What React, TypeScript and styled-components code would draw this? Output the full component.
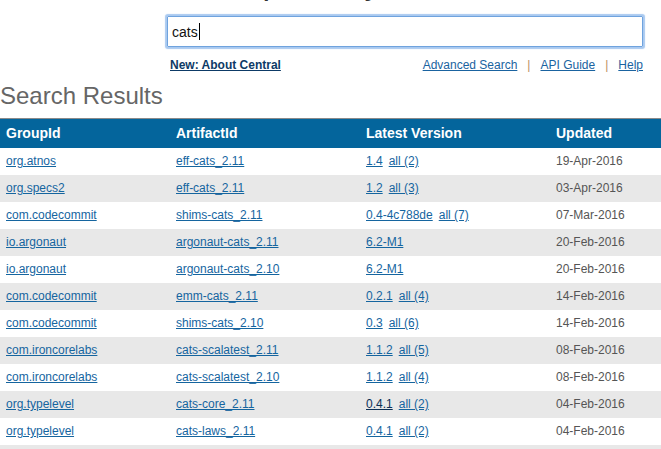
import React from "react";
import styled, { createGlobalStyle } from "styled-components";

const Global = createGlobalStyle`
  html, body { margin: 0; padding: 0; background: #ffffff; }
  body { font-family: "Liberation Sans", Arial, Helvetica, sans-serif; overflow: hidden; }
`;

const Page = styled.div`
  width: 661px;
  height: 449px;
  overflow: hidden;
  display: flex;
  flex-direction: column;
`;

const Masthead = styled.div`
  height: 4px;
  flex-shrink: 0;
  overflow: hidden;
  padding-left: 32px;
`;

const MastTitle = styled.h1`
  margin: -35px 0 0 0;
  font-size: 34px;
  line-height: 34px;
  font-weight: normal;
  color: #333;
  white-space: nowrap;
`;

const SearchArea = styled.div`
  margin-top: 12px;
  margin-left: 167px;
  width: 476px;
  display: flex;
  flex-direction: column;
`;

const Field = styled.div`
  box-sizing: border-box;
  height: 31px;
  border: 1px solid #6fa3de;
  box-shadow: 0 0 1px 2px #a9c9f0;
  border-radius: 1px;
  display: flex;
  align-items: center;
  padding-left: 4px;
  font-size: 14px;
  color: #111;
`;

const Caret = styled.span`
  display: inline-block;
  width: 1px;
  height: 17px;
  background: #000;
  margin-left: 1px;
`;

const LinkBar = styled.div`
  margin-top: 11px;
  display: flex;
  justify-content: space-between;
  align-items: center;
  font-size: 12px;
  line-height: 14px;
  padding-left: 3px;
`;

const NewsLink = styled.a`
  color: #0d3a66;
  font-weight: bold;
  text-decoration: underline;
`;

const NavLinks = styled.div`
  display: flex;
  align-items: center;
  gap: 10px;
`;

const NavLink = styled.a`
  color: #1a63a0;
  text-decoration: underline;
`;

const Sep = styled.span`
  color: #b88e5f;
`;

const Title = styled.h2`
  margin: 10px 0 0 0;
  font-size: 24px;
  line-height: 28px;
  font-weight: normal;
  color: #666;
`;

const Table = styled.table`
  margin-top: 8px;
  width: 661px;
  flex-shrink: 0;
  border-collapse: collapse;
  table-layout: fixed;
  font-size: 12px;
`;

const HeadRow = styled.tr`
  background: #04659c;
  border-top: 1px solid #8a8a8a;
`;

const Th = styled.th<{ $w?: number }>`
  ${(p) => (p.$w ? `width: ${p.$w}px;` : "")}
  height: 29px;
  padding: 0 0 0 6px;
  text-align: left;
  color: #fff;
  font-size: 14px;
  font-weight: bold;
  box-sizing: border-box;
`;

const Row = styled.tr<{ $alt: boolean }>`
  background: ${(p) => (p.$alt ? "#e8e8e8" : "#ffffff")};
`;

const Td = styled.td`
  height: 27px;
  padding: 0 0 0 6px;
  box-sizing: border-box;
  white-space: nowrap;
  color: #555;
`;

const CellLink = styled.a<{ $visited?: boolean }>`
  color: ${(p) => (p.$visited ? "#0c2f55" : "#15659f")};
  text-decoration: underline;
  margin-right: 6px;
`;

type R = { g: string; a: string; v: string; all?: string; d: string; visited?: boolean };

const rows: R[] = [
  { g: "org.atnos", a: "eff-cats_2.11", v: "1.4", all: "all (2)", d: "19-Apr-2016" },
  { g: "org.specs2", a: "eff-cats_2.11", v: "1.2", all: "all (3)", d: "03-Apr-2016" },
  { g: "com.codecommit", a: "shims-cats_2.11", v: "0.4-4c788de", all: "all (7)", d: "07-Mar-2016" },
  { g: "io.argonaut", a: "argonaut-cats_2.11", v: "6.2-M1", d: "20-Feb-2016" },
  { g: "io.argonaut", a: "argonaut-cats_2.10", v: "6.2-M1", d: "20-Feb-2016" },
  { g: "com.codecommit", a: "emm-cats_2.11", v: "0.2.1", all: "all (4)", d: "14-Feb-2016" },
  { g: "com.codecommit", a: "shims-cats_2.10", v: "0.3", all: "all (6)", d: "14-Feb-2016" },
  { g: "com.ironcorelabs", a: "cats-scalatest_2.11", v: "1.1.2", all: "all (5)", d: "08-Feb-2016" },
  { g: "com.ironcorelabs", a: "cats-scalatest_2.10", v: "1.1.2", all: "all (4)", d: "08-Feb-2016" },
  { g: "org.typelevel", a: "cats-core_2.11", v: "0.4.1", all: "all (2)", d: "04-Feb-2016", visited: true },
  { g: "org.typelevel", a: "cats-laws_2.11", v: "0.4.1", all: "all (2)", d: "04-Feb-2016" },
  { g: "org.typelevel", a: "cats-free_2.11", v: "0.4.1", all: "all (2)", d: "04-Feb-2016" },
];

export default function App() {
  return (
    <Page>
      <Global />
      <Masthead>
        <MastTitle>The Central Repository</MastTitle>
      </Masthead>
      <SearchArea>
        <Field role="textbox">
          cats
          <Caret />
        </Field>
        <LinkBar>
          <NewsLink href="#">New: About Central</NewsLink>
          <NavLinks>
            <NavLink href="#">Advanced Search</NavLink>
            <Sep>|</Sep>
            <NavLink href="#">API Guide</NavLink>
            <Sep>|</Sep>
            <NavLink href="#">Help</NavLink>
          </NavLinks>
        </LinkBar>
      </SearchArea>
      <Title>Search Results</Title>
      <Table>
        <thead>
          <HeadRow>
            <Th $w={170}>GroupId</Th>
            <Th $w={190}>ArtifactId</Th>
            <Th $w={190}>Latest Version</Th>
            <Th>Updated</Th>
          </HeadRow>
        </thead>
        <tbody>
          {rows.map((r, i) => (
            <Row key={i} $alt={i % 2 === 1}>
              <Td>
                <CellLink href="#">{r.g}</CellLink>
              </Td>
              <Td>
                <CellLink href="#">{r.a}</CellLink>
              </Td>
              <Td>
                <CellLink href="#" $visited={r.visited}>{r.v}</CellLink>
                {r.all && <CellLink href="#">{r.all}</CellLink>}
              </Td>
              <Td>{r.d}</Td>
            </Row>
          ))}
        </tbody>
      </Table>
    </Page>
  );
}
